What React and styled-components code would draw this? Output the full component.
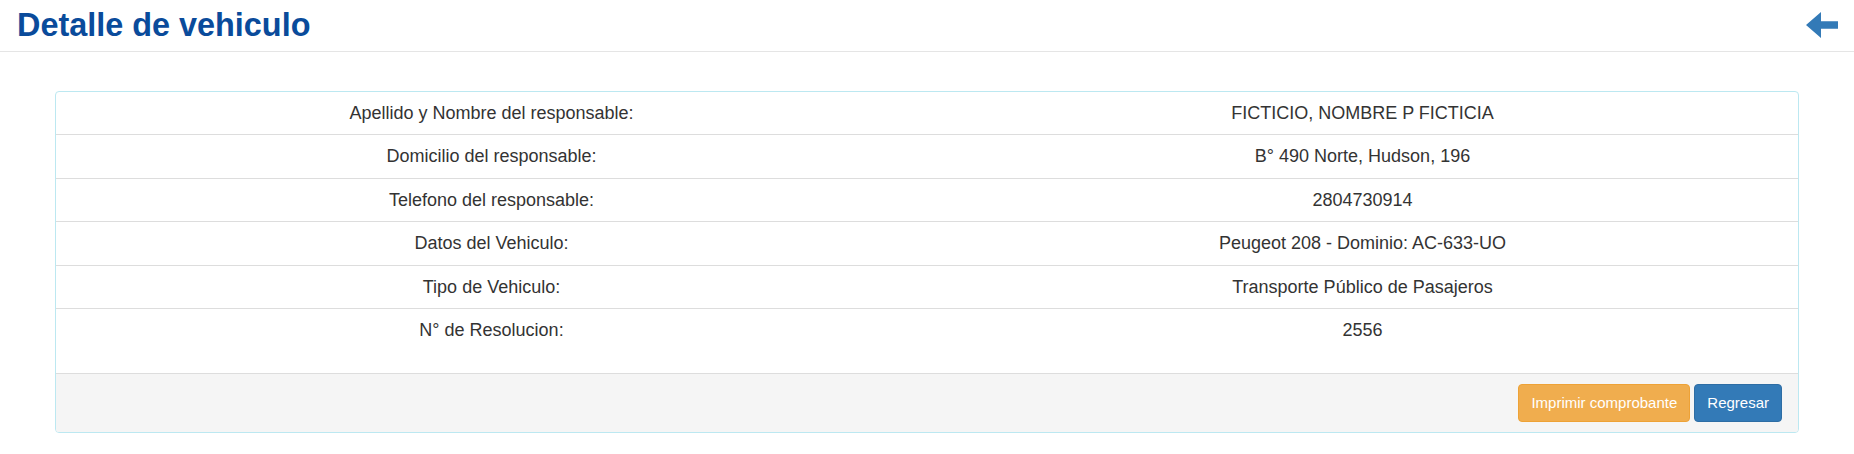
import styled, { createGlobalStyle } from "styled-components";

const GlobalStyle = createGlobalStyle`
  html, body {
    margin: 0;
    padding: 0;
    background: #fff;
    font-family: "Liberation Sans", Arial, Helvetica, sans-serif;
    color: #333;
  }
  * {
    box-sizing: border-box;
  }
`;

const Page = styled.div`
  width: 100%;
  min-height: 454px;
  background: #fff;
`;

const Header = styled.header`
  display: flex;
  align-items: center;
  justify-content: space-between;
  height: 52px;
  padding: 0 16px 0 17px;
  border-bottom: 1px solid #e5e5e5;
`;

const Title = styled.h1`
  margin: 0;
  padding-bottom: 1px;
  font-size: 32.4px;
  font-weight: bold;
  line-height: 1;
  color: #0a4b9b;
`;

const BackButton = styled.a`
  display: flex;
  align-items: center;
  padding-bottom: 1px;
  cursor: pointer;
  color: #337ab7;
`;

const Content = styled.main`
  padding: 39px 55px 0;
`;

const Panel = styled.section`
  border: 1px solid #bce8f1;
  border-radius: 4px;
  overflow: hidden;
  background: #fff;
`;

const Table = styled.table`
  width: 100%;
  border-collapse: collapse;
  margin-bottom: 22px;
`;

const Row = styled.tr`
  & + & td {
    border-top: 1px solid #ddd;
  }
`;

const Cell = styled.td`
  width: 50%;
  padding: 10px 8px;
  text-align: center;
  font-size: 18px;
  line-height: 22.4px;
  color: #333;
`;

const Footer = styled.footer`
  display: flex;
  justify-content: flex-end;
  gap: 4px;
  padding: 10px 16px 10px 15px;
  background: #f5f5f5;
  border-top: 1px solid #ddd;
`;

const Button = styled.button`
  height: 38px;
  padding: 7px 12px;
  font-family: inherit;
  font-size: 15px;
  line-height: 22px;
  color: #fff;
  border-radius: 4px;
  border: 1px solid ${p => (p.$variant === "warning" ? "#eea236" : "#2e6da4")};
  background: ${p => (p.$variant === "warning" ? "#f0ad4e" : "#337ab7")};
  cursor: pointer;
`;

const ArrowLeft = () => (
  <svg width="32" height="26" viewBox="0 0 32 26" fill="currentColor">
    <polygon points="0,13 15,0 15,9.3 32,9.3 32,16.7 15,16.7 15,26" />
  </svg>
);

const rows = [
  ["Apellido y Nombre del responsable:", "FICTICIO, NOMBRE P FICTICIA"],
  ["Domicilio del responsable:", "B° 490 Norte, Hudson, 196"],
  ["Telefono del responsable:", "2804730914"],
  ["Datos del Vehiculo:", "Peugeot 208 - Dominio: AC-633-UO"],
  ["Tipo de Vehiculo:", "Transporte Público de Pasajeros"],
  ["N° de Resolucion:", "2556"],
];

const App = () => (
  <Page>
    <GlobalStyle />
    <Header>
      <Title>Detalle de vehiculo</Title>
      <BackButton title="Regresar">
        <ArrowLeft />
      </BackButton>
    </Header>
    <Content>
      <Panel>
        <Table>
          <tbody>
            {rows.map(([label, value]) => (
              <Row key={label}>
                <Cell>{label}</Cell>
                <Cell>{value}</Cell>
              </Row>
            ))}
          </tbody>
        </Table>
        <Footer>
          <Button $variant="warning">Imprimir comprobante</Button>
          <Button $variant="primary">Regresar</Button>
        </Footer>
      </Panel>
    </Content>
  </Page>
);

export default App;
